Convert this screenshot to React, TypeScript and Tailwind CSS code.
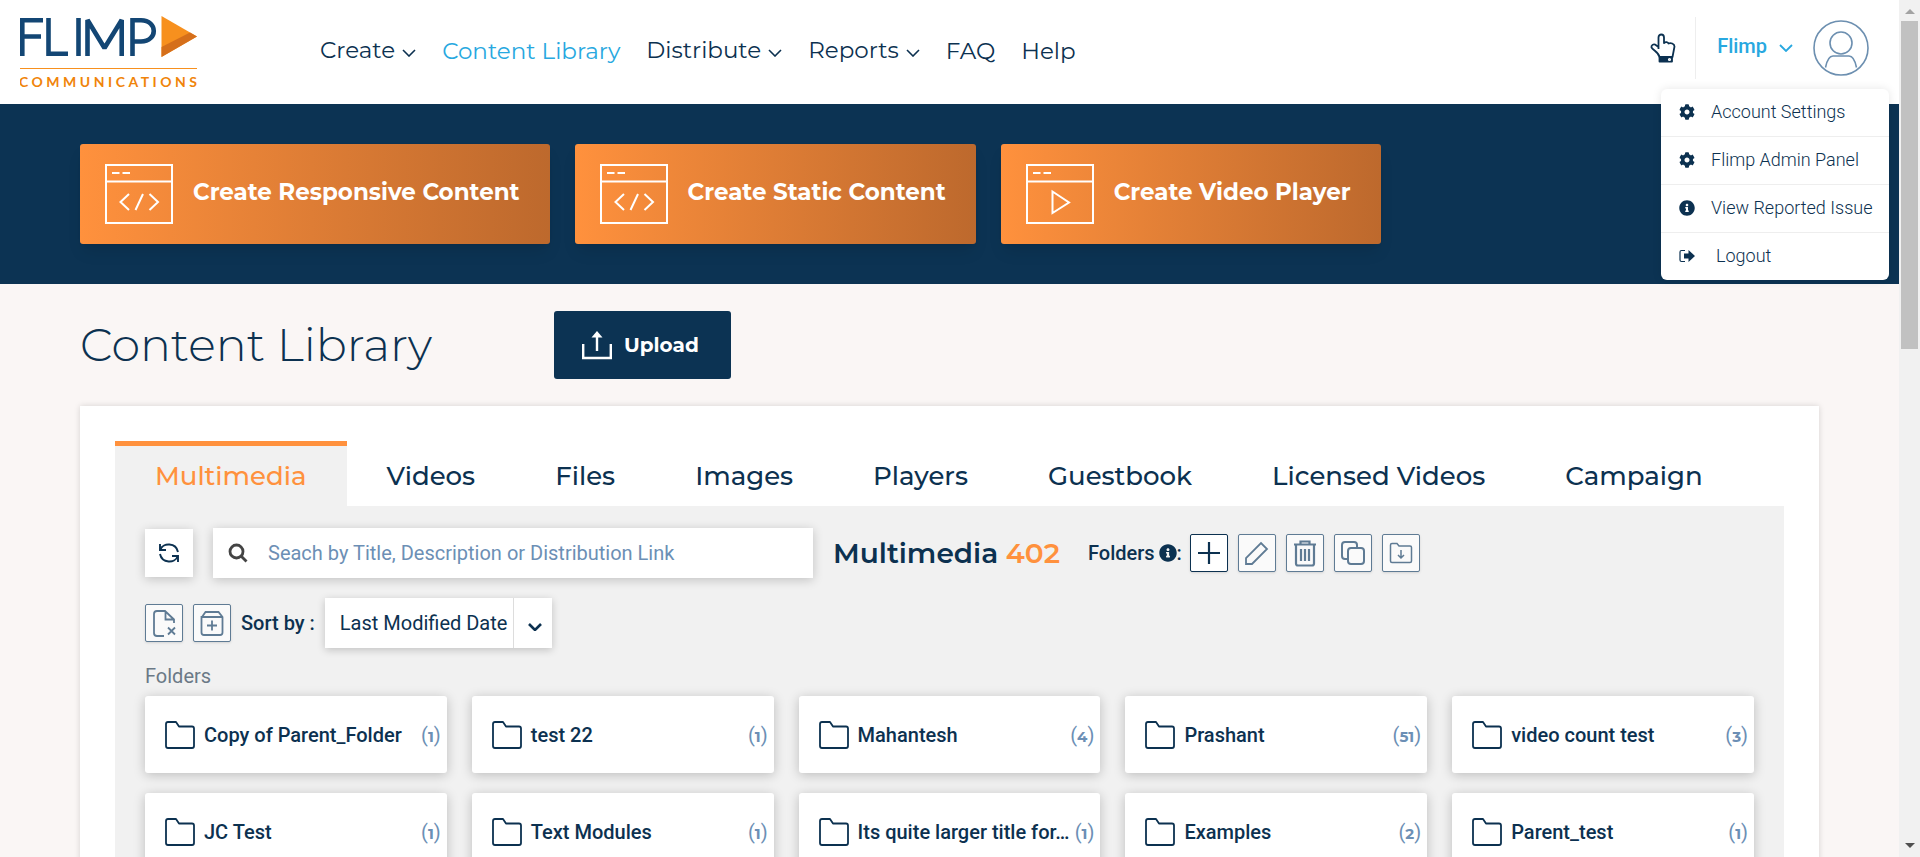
import React from "react";
import { FaCog, FaInfoCircle } from "react-icons/fa";

const heading = "font-['Montserrat','Inter',sans-serif]";

type NavItem = { label: string; menu?: boolean; active?: boolean };

const navItems: NavItem[] = [
  { label: "Create", menu: true },
  { label: "Content Library", active: true },
  { label: "Distribute", menu: true },
  { label: "Reports", menu: true },
  { label: "FAQ" },
  { label: "Help" },
];

const tabs = ["Multimedia", "Videos", "Files", "Images", "Players", "Guestbook", "Licensed Videos", "Campaign"];

const folders = [
  { name: "Copy of Parent_Folder", count: 1 },
  { name: "test 22", count: 1 },
  { name: "Mahantesh", count: 4 },
  { name: "Prashant", count: 51 },
  { name: "video count test", count: 3 },
  { name: "JC Test", count: 1 },
  { name: "Text Modules", count: 1 },
  { name: "Its quite larger title for…", count: 1 },
  { name: "Examples", count: 2 },
  { name: "Parent_test", count: 1 },
];

function Chevron({ className = "", width = 1.5 }: { className?: string; width?: number }) {
  return (
    <svg viewBox="0 0 14 8" className={className} fill="none" stroke="currentColor" strokeWidth={width} aria-hidden="true">
      <path d="M1 1l6 6 6-6" />
    </svg>
  );
}

function Logo() {
  return (
    <a href="#" aria-label="Flimp Communications" className="block shrink-0">
      <svg viewBox="0 0 184 78" className="h-[78px] w-[184px]" aria-hidden="true">
        <g fill="none" stroke="#134674" strokeWidth="4.600">
          <path d="M2.300 42V6.300H23M2.300 22.500H21" />
          <path d="M28.500 4V39.700H48" />
          <path d="M58.500 4V42" />
          <path d="M67.500 42V6L84.500 34 101.700 6V42" strokeLinejoin="bevel" />
          <path d="M112.500 42V6.300H121C138 6.300 138 27.500 121 27.500H113" />
        </g>
        <path d="M141.500 2L177 22.500 141.500 43Z" fill="#f7901e" />
        <path d="M177 22.500L141.500 43V33L170 18.500Z" fill="#d56f1b" />
        <path d="M0 54.500H177" stroke="#f7901e" strokeWidth="1.200" />
        <text x="-1" y="73" fontFamily="Lato, sans-serif" fontWeight="700" fontSize="14" letterSpacing="3.500" fill="#f0840a">
          COMMUNICATIONS
        </text>
      </svg>
    </a>
  );
}

function BannerIcon({ kind }: { kind: "code" | "play" }) {
  return (
    <svg viewBox="0 0 68 60" className="h-[60px] w-[68px] shrink-0" fill="none" stroke="#fff" strokeWidth="2" aria-hidden="true">
      <path d="M1 1H67V59H1ZM1 17.500H67M7 9H14.500M17.500 9H25" />
      {kind === "code" ? (
        <path d="M24 30L15.500 38 24 46M38 30L30.500 46M44.500 30L53 38 44.500 46" />
      ) : (
        <path d="M26.500 27.500V49L43 38.500Z" />
      )}
    </svg>
  );
}

function BannerButton({ kind, children }: { kind: "code" | "play"; children: React.ReactNode }) {
  return (
    <button
      type="button"
      className={`${heading} flex h-[100px] items-center gap-5 rounded-[3px] bg-linear-to-r from-[#ff913d] to-[#bd692d] px-[25px] pr-[30px] text-[23px] font-bold text-white shadow-lg`}
    >
      <BannerIcon kind={kind} />
      <span className="pb-1 whitespace-nowrap">{children}</span>
    </button>
  );
}

function ToolButton({ label, strong, children }: { label: string; strong?: boolean; children: React.ReactNode }) {
  return (
    <button
      type="button"
      aria-label={label}
      className={`flex size-[38px] items-center justify-center rounded-[2px] border shadow-sm ${
        strong ? "border-[#0c3150] bg-white text-[#0c3150]" : "border-[#5f7b94] bg-[#fafafa] text-[#5f7b94]"
      }`}
    >
      <svg viewBox="0 0 36 36" className="size-9" fill="none" stroke="currentColor" strokeWidth="1.800" aria-hidden="true">
        {children}
      </svg>
    </button>
  );
}

function MenuRow({ icon, children }: { icon: React.ReactNode; children: React.ReactNode }) {
  return (
    <li className="border-b border-[#eee] last:border-b-0">
      <a href="#" className="flex h-[47px] items-center gap-4 pb-[2px] pl-[18px] text-[18px] font-light whitespace-nowrap">
        <span className="flex w-4 justify-center">{icon}</span>
        {children}
      </a>
    </li>
  );
}

function Header() {
  return (
    <header className="relative z-10 flex h-[104px] items-start bg-white pr-[30px] pl-5">
      <div className="pt-[14px]">
        <Logo />
      </div>
      <nav className={`${heading} ml-[116px] flex items-start gap-[26px] pt-[35px] text-[23px] leading-[30px]`}>
        {navItems.map((item) =>
          item.menu ? (
            <a key={item.label} href="#" className="flex items-center gap-[7px] whitespace-nowrap">
              {item.label}
              <Chevron className="mt-[5px] h-2 w-[14px]" width={1.600} />
            </a>
          ) : (
            <a key={item.label} href="#" className={`pt-px whitespace-nowrap ${item.active ? "text-[#28a8e0]" : ""}`}>
              {item.label}
            </a>
          ),
        )}
      </nav>
      <div className="ml-auto flex items-center pt-[17px]">
        <button type="button" aria-label="Quick help" className="mr-[19px]">
          <svg viewBox="0 0 26 30" className="h-[30px] w-[26px]" fill="none" stroke="currentColor" strokeWidth="1.800" strokeLinejoin="round" aria-hidden="true">
            <path d="M8.500 16V4.500C8.500 0.500 14 0.500 14 4.500V10C15.500 8.500 18 9 18.500 10.500 20.500 9.500 24.500 10.500 24.500 13.500L22.500 24H9.500C8.500 19 3.500 17.500 1.500 14.500 1 12 3.500 11 5 11.500L8.500 14" />
            <path d="M9.500 24.500H22V28.500H9.500Z" fill="currentColor" />
            <circle cx="19.500" cy="26.500" r="0.700" stroke="#fff" />
          </svg>
        </button>
        <div className="h-[62px] w-px bg-[#eee]" />
        <button type="button" className="ml-[21px] flex items-center gap-3 pb-1 text-[20px] font-medium text-[#28a8e0]">
          Flimp
          <Chevron className="mt-1 h-2 w-[14px]" width={1.800} />
        </button>
        <svg viewBox="0 0 56 56" className="ml-5 size-14" fill="none" stroke="#6c8fb0" strokeWidth="1.600" aria-hidden="true">
          <circle cx="28" cy="28" r="27" />
          <circle cx="28" cy="23" r="11" />
          <path d="M12.500 47.500C14 40 16 36 20 36H36C40 36 42 40 43.500 47.500" />
        </svg>
      </div>
      <ul className="absolute top-[89px] right-[10px] w-[228px] rounded-md bg-white shadow-[0_0_10px_rgba(0,0,0,0.1)]">
        <MenuRow icon={<FaCog className="size-4" />}>Account Settings</MenuRow>
        <MenuRow icon={<FaCog className="size-4" />}>Flimp Admin Panel</MenuRow>
        <MenuRow icon={<FaInfoCircle className="size-4" />}>View Reported Issue</MenuRow>
        <MenuRow
          icon={
            <svg viewBox="0 0 16 14" className="h-[14px] w-4" aria-hidden="true">
              <path d="M6 1.500H2.500Q1 1.500 1 3V11Q1 12.500 2.500 12.500H6" fill="none" stroke="currentColor" strokeWidth="1.200" />
              <path d="M5 4.500H9.500V1L16 7 9.500 13V9.500H5Z" fill="currentColor" />
            </svg>
          }
        >
          <span className="pl-[5px]">Logout</span>
        </MenuRow>
      </ul>
    </header>
  );
}

function Toolbar() {
  return (
    <div>
      <div className="flex h-[50px] items-center">
        <button type="button" aria-label="Refresh" className="flex size-12 items-center justify-center bg-white shadow-[0_2px_10px_rgba(0,0,0,0.2)]">
          <svg viewBox="0 0 20 20" className="size-5" fill="none" stroke="currentColor" strokeWidth="1.900" aria-hidden="true">
            <path d="M1 1V7H7M19 19V13H13" />
            <path d="M1.500 6.500C4 -0.500 17 -0.500 19 9M18.500 13.500C16 20.500 3 20.500 1 11" />
          </svg>
        </button>
        <label className="ml-5 flex h-[50px] w-[600px] items-center bg-white pl-[15px] shadow-[0_2px_10px_rgba(0,0,0,0.2)]">
          <svg viewBox="0 0 20 20" className="size-5 text-[#444]" fill="none" stroke="currentColor" strokeWidth="2.800" aria-hidden="true">
            <circle cx="8.500" cy="8.500" r="6.500" />
            <path d="M13 13L18.500 18.500" />
          </svg>
          <input
            type="text"
            aria-label="Search"
            placeholder="Seach by Title, Description or Distribution Link"
            className="ml-5 flex-1 text-[20px] outline-none placeholder:text-[#6c8fb5]"
          />
        </label>
        <h2 className={`${heading} ml-5 text-[28px] font-semibold whitespace-nowrap`}>
          Multimedia <span className="text-[#ff913d]">402</span>
        </h2>
        <p className="ml-7 flex items-center gap-1 text-[20px] font-medium">
          Folders
          <span className="flex items-center">
            <FaInfoCircle className="size-[18px]" />:
          </span>
        </p>
        <div className="ml-2 flex gap-[10px]">
          <ToolButton label="Add folder" strong>
            <path d="M18 7V29M7 18H29" strokeWidth="2.200" />
          </ToolButton>
          <ToolButton label="Edit folder">
            <path d="M7 29V23L22 8 28 14 13 29Z" />
          </ToolButton>
          <ToolButton label="Delete folder">
            <path d="M7 9.500H29M13.500 9.500V6.500H22.500V9.500M9 9.500V28.500Q9 30.500 11 30.500H25Q27 30.500 27 28.500V9.500M14 14V26M18 14V26M22 14V26" strokeWidth="2.200" />
          </ToolButton>
          <ToolButton label="Copy folder">
            <path d="M13 24H10Q7 24 7 21V10Q7 7 10 7H19Q22 7 22 10V13" strokeWidth="2" />
            <rect x="13" y="13" width="16" height="16" rx="3" strokeWidth="2" />
          </ToolButton>
          <ToolButton label="Move folder">
            <path d="M7.500 26V10Q7.500 8.500 9 8.500H14L16 11H27Q28.500 11 28.500 12.500V26Q28.500 27.500 27 27.500H9Q7.500 27.500 7.500 26ZM18 15V23M15 20L18 23 21 20" strokeWidth="1.500" />
          </ToolButton>
        </div>
      </div>
      <div className="mt-5 flex h-[50px] items-center">
        <div className="flex gap-[10px]">
          <ToolButton label="Remove file">
            <path d="M18 31H11Q8 31 8 28V9Q8 6 11 6H19L28 14.500V18M19.500 6V14.500H28M22 22.500L29 29.500M29 22.500L22 29.500" />
          </ToolButton>
          <ToolButton label="Archive">
            <path d="M8 12L11.500 7H24.500L28.500 12V27.500Q28.500 30 26 30H10Q7.500 30 7.500 27.500V12ZM8 12H28M18 15.500V25.500M13 20.500H23" />
          </ToolButton>
        </div>
        <label htmlFor="sort" className="ml-[10px] text-[20px] font-medium whitespace-nowrap">
          Sort by :
        </label>
        <div className="relative ml-[10px] h-[50px] w-[227px] bg-white shadow-[0_2px_8px_rgba(0,0,0,0.2)]">
          <select id="sort" className="h-full w-full appearance-none pl-[15px] text-[20px] outline-none">
            <option>Last Modified Date</option>
          </select>
          <span className="pointer-events-none absolute inset-y-0 right-0 flex w-[39px] items-center justify-center border-l border-[#ddd] pt-2 pl-1">
            <Chevron className="h-2 w-[14px]" width={2.600} />
          </span>
        </div>
      </div>
    </div>
  );
}

function FolderCard({ name, count }: { name: string; count: number }) {
  return (
    <a href="#" className="flex h-[77px] items-center rounded-[3px] bg-white pr-[6px] pl-5 shadow-[0_2px_12px_rgba(0,0,0,0.22)]">
      <svg viewBox="0 0 30 28" className="h-7 w-[30px] shrink-0" fill="none" stroke="currentColor" strokeWidth="1.800" strokeLinejoin="round" aria-hidden="true">
        <path d="M1 25V3Q1 1 3 1H11L14 5.500H27Q29 5.500 29 7.500V25Q29 27 27 27H3Q1 27 1 25Z" />
      </svg>
      <span className="ml-[9px] min-w-0 flex-1 text-[20px] font-medium whitespace-nowrap">{name}</span>
      <span className="flex items-baseline text-[20px] text-[#6c8fb5]">
        (<b className={`${heading} text-[15px] font-bold`}>{count}</b>)
      </span>
    </a>
  );
}

export default function App() {
  return (
    <div className="flex h-screen overflow-hidden font-['Roboto',sans-serif] text-[#0c3150]">
      <div className="min-w-0 flex-1 overflow-hidden bg-[#faf6f5]">
        <Header />
        <section className="flex gap-[25px] bg-[#0c3353] px-20 py-10">
          <BannerButton kind="code">Create Responsive Content</BannerButton>
          <BannerButton kind="code">Create Static Content</BannerButton>
          <BannerButton kind="play">Create Video Player</BannerButton>
        </section>
        <main className="px-20 pt-[27px]">
          <div className="flex h-[68px] items-center">
            <h1 className={`${heading} w-[474px] pb-[2px] text-[46px] font-light`}>Content Library</h1>
            <button
              type="button"
              className={`${heading} flex h-[68px] items-center gap-3 rounded-[3px] bg-[#0c3353] pr-8 pl-7 text-[20px] font-bold text-white`}
            >
              <svg viewBox="0 0 30 30" className="size-[30px]" fill="none" stroke="currentColor" strokeWidth="2.400" aria-hidden="true">
                <path d="M1.200 14V28H28.800V14M15 21V5" />
                <path d="M15 1L20.500 7.500H9.500Z" fill="currentColor" stroke="none" />
              </svg>
              Upload
            </button>
          </div>
          <div className="mt-[27px] bg-white px-[35px] pt-[35px] shadow-[0_0_6px_rgba(0,0,0,0.15)]">
            <div role="tablist" className={`${heading} flex text-[26px] font-medium`}>
              {tabs.map((tab, i) => (
                <button
                  key={tab}
                  type="button"
                  role="tab"
                  aria-selected={i === 0}
                  className={`h-[65px] border-t-[5px] px-10 whitespace-nowrap ${
                    i === 0 ? "border-[#ff913d] bg-[#f1f1f1] text-[#ff913d]" : "border-transparent"
                  }`}
                >
                  {tab}
                </button>
              ))}
            </div>
            <div className="bg-[#f1f1f1] px-[30px] pt-[22px] pb-10">
              <Toolbar />
              <h3 className="mt-4 text-[20px] leading-6 text-[#6b7986]">Folders</h3>
              <div className="mt-2 grid grid-cols-5 gap-x-[25px] gap-y-5">
                {folders.map((folder) => (
                  <FolderCard key={folder.name} {...folder} />
                ))}
              </div>
            </div>
          </div>
        </main>
      </div>
      <div className="flex w-[21px] flex-col items-center bg-[#f1f1f1] pt-[9px] pb-[9px]" aria-hidden="true">
        <svg viewBox="0 0 10 5" className="h-[5px] w-[10px]" fill="#a3a3a3">
          <path d="M0 5L5 0 10 5Z" />
        </svg>
        <div className="mt-[7px] h-[328px] w-[17px] bg-[#c1c1c1]" />
        <svg viewBox="0 0 10 5" className="mt-auto h-[5px] w-[10px]" fill="#505050">
          <path d="M0 0L5 5 10 0Z" />
        </svg>
      </div>
    </div>
  );
}
